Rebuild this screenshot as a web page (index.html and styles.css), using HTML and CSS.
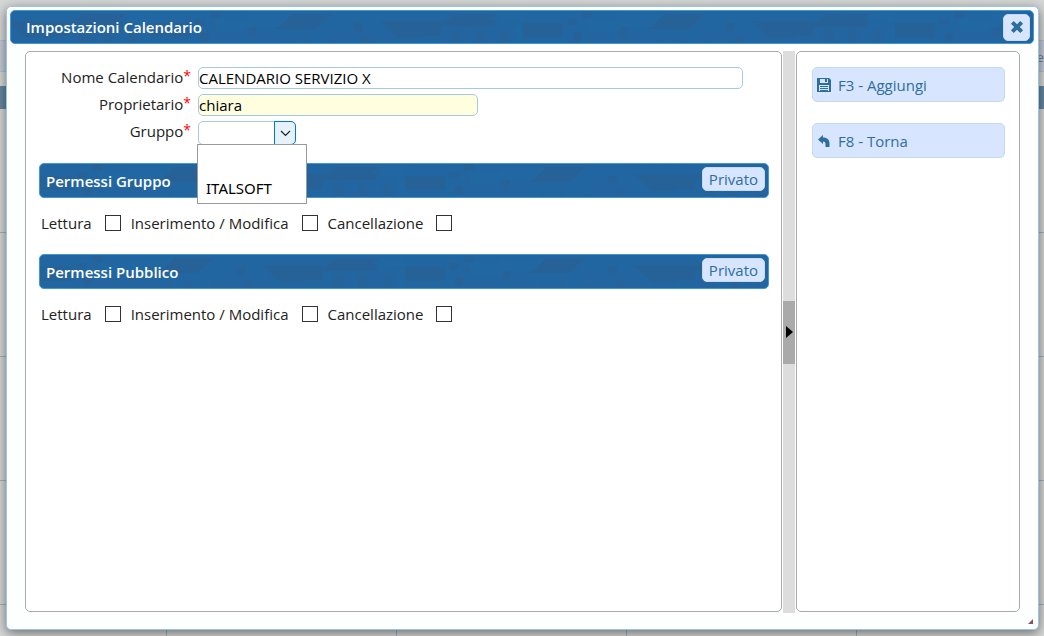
FILE: index.html
```html
<!DOCTYPE html>
<html lang="it">
<head>
<meta charset="utf-8">
<title>Impostazioni Calendario</title>
<meta name="viewport" content="width=device-width, initial-scale=1">
<link rel="stylesheet" href="styles.css">
</head>
<body>
<svg class="defs" width="0" height="0" aria-hidden="true">
  <defs>
    <g id="motif" opacity=".75">
      <path fill="#286094" d="M0 10h62v15h-17l-1 2H18zM76 3h44l-10 6h6v7H62V12zM144 12h40v14h-40zM284 3h41l-16 15h-42z"/>
      <path fill="#2564a0" d="M62 18h74v17H62zM200 20h70v15h-70zM0 26h18v9H0zM320 18h52v17h-52z" opacity=".6"/>
      <path fill="#1f69a6" d="M120 3h24v8h-24zM208 8h36v12h-36zM240 4h44l-12 12h-32zM136 16h8v18h-8z" opacity=".7"/>
      <path fill="#286094" d="M72 19h11v13H72zM97 19h9v13h-9zM122 19h8v13h-8zM240 16h9v10h-9zM188 8h10v6h-10zM203 0h10v7h-10zM347 12h9v9h-9zM355 25h8v8h-8z" opacity=".7"/>
      <circle cx="198" cy="26" r="5" fill="#286094"/>
      <circle cx="208" cy="15" r="3" fill="#286094" opacity=".6"/>
      <path fill="#286094" d="M278 32c0-6 7-6 7 0zM296 32c0-7 8-7 8 0zM322 35c0-9 8-9 8 0z" opacity=".6"/>
    </g>
    <pattern id="tech-title" width="372" height="35" patternUnits="userSpaceOnUse" x="-4"><use href="#motif"/></pattern>
    <pattern id="tech-section" width="372" height="35" patternUnits="userSpaceOnUse" x="221"><use href="#motif"/></pattern>
  </defs>
</svg>

<div class="backdrop" aria-hidden="true">
  <div class="backdrop-toolbar">e</div>
  <div class="backdrop-head"></div>
  <div class="backdrop-grid"></div>
</div>

<section class="dialog" role="dialog" aria-labelledby="dialog-title">
  <header class="bar bar-title">
    <svg class="bar-art" aria-hidden="true"><rect width="100%" height="100%" fill="url(#tech-title)"/></svg>
    <h1 class="bar-text" id="dialog-title">Impostazioni Calendario</h1>
    <button class="close" type="button" aria-label="Chiudi">
      <svg width="14" height="14" viewBox="0 0 12 12" aria-hidden="true"><path d="M2 2l8 8M10 2l-8 8" stroke="#2e6e9e" stroke-width="3.4" fill="none"/></svg>
    </button>
  </header>

  <div class="content">
    <main class="panel form-panel">
      <form class="fields">
        <label class="field-label" for="nome">Nome Calendario<sup class="required">*</sup></label>
        <input class="field field-name" id="nome" type="text" value="CALENDARIO SERVIZIO X">
        <label class="field-label" for="proprietario">Proprietario<sup class="required">*</sup></label>
        <input class="field field-owner" id="proprietario" type="text" value="chiara">
        <label class="field-label" for="gruppo">Gruppo<sup class="required">*</sup></label>
        <div class="combo">
          <select class="field field-group" id="gruppo"><option></option><option>ITALSOFT</option></select>
          <span class="combo-arrow"><svg width="11" height="7" viewBox="0 0 11 7" aria-hidden="true"><path d="M1 1l4.500 4.500L10 1" fill="none" stroke="#222" stroke-width="1.200"/></svg></span>
          <ul class="combo-list" role="listbox" aria-label="Gruppo">
            <li class="combo-option" role="option"></li>
            <li class="combo-option" role="option">ITALSOFT</li>
          </ul>
        </div>
      </form>

      <section class="permissions">
        <div class="bar bar-section">
          <svg class="bar-art" aria-hidden="true"><rect width="100%" height="100%" fill="url(#tech-section)"/></svg>
          <h2 class="bar-text">Permessi Gruppo</h2>
          <button class="private" type="button">Privato</button>
        </div>
        <div class="checks">
          <label class="check">Lettura<input class="box" type="checkbox"></label>
          <label class="check">Inserimento / Modifica<input class="box" type="checkbox"></label>
          <label class="check">Cancellazione<input class="box" type="checkbox"></label>
        </div>
      </section>

      <section class="permissions">
        <div class="bar bar-section">
          <svg class="bar-art" aria-hidden="true"><rect width="100%" height="100%" fill="url(#tech-section)"/></svg>
          <h2 class="bar-text">Permessi Pubblico</h2>
          <button class="private" type="button">Privato</button>
        </div>
        <div class="checks">
          <label class="check">Lettura<input class="box" type="checkbox"></label>
          <label class="check">Inserimento / Modifica<input class="box" type="checkbox"></label>
          <label class="check">Cancellazione<input class="box" type="checkbox"></label>
        </div>
      </section>
    </main>

    <div class="splitter">
      <button class="splitter-toggle" type="button" aria-label="Comprimi pannello"><svg width="7" height="12" viewBox="0 0 7 12" aria-hidden="true"><path d="M0 0l7 6-7 6z" fill="#000"/></svg></button>
    </div>

    <aside class="panel actions">
      <button class="action" type="button">
        <svg width="14" height="14" viewBox="0 0 14 14" aria-hidden="true"><path fill="#2e6e9e" fill-rule="evenodd" d="M0 0h12l2 2v12H0zM3 1v4h8V1zM2 7v6h10V7z"/><path fill="#2e6e9e" d="M8 1h2v3H8zM3 8h8v1H3zM3 10h8v1H3zM3 12h8v1H3z"/></svg>
        <span>F3 - Aggiungi</span>
      </button>
      <button class="action" type="button">
        <svg width="14" height="14" viewBox="0 0 14 14" aria-hidden="true"><path fill="#2e6e9e" d="M1 5.500L6 1v2.500c4.500 0 6.500 2.500 6.500 6V13h-4v-2.500C8.500 8.500 8 7.500 6 7.500V10z"/></svg>
        <span>F8 - Torna</span>
      </button>
    </aside>
  </div>
  <svg class="resize" width="5" height="5" viewBox="0 0 5 5" aria-hidden="true"><path d="M5 0v5H0z" fill="#8a5058"/></svg>
</section>
</body>
</html>
```
FILE: styles.css
```css
* { box-sizing: border-box; }

body {
  margin: 0;
  min-height: 100vh;
  padding: 6px 5px 6px 6px;
  display: flex;
  background: #d6d8d7;
  color: #222;
  font: 15px/20px "Open Sans", sans-serif;
}

button, input, select { font: inherit; margin: 0; }

.defs { position: absolute; }

/* Dimmed calendar page under the dialog */
.backdrop {
  position: absolute;
  inset: 0;
  z-index: -1;
  overflow: hidden;
  display: flex;
  flex-direction: column;
  padding-top: 40px;
}
.backdrop-toolbar {
  height: 32px;
  border: 1px solid #b5c2d0;
  border-width: 1px 0;
  background: #c4cbd9;
  color: #74828e;
  text-align: right;
  font-size: 13px;
  line-height: 32px;
}
.backdrop-head { height: 23px; margin-top: 14px; background: #6687a0; }
.backdrop-grid {
  flex: 1;
  background:
    repeating-linear-gradient(to bottom, transparent 0 123px, #9fb3bf 123px 124px),
    repeating-linear-gradient(to right, transparent 0 229px, #9fb3bf 229px 230px) -63px 0 / calc(100% + 63px) 100%;
}

.dialog {
  position: relative;
  flex: 1;
  min-width: 0;
  display: flex;
  flex-direction: column;
  padding: 3px 4px 16px 3px;
  border: 1px solid #9cc5e2;
  border-radius: 5px;
  background: #fdfefe;
  box-shadow: 0 3px 12px rgba(0, 0, 0, .5);
}

.bar {
  position: relative;
  display: flex;
  align-items: center;
  justify-content: space-between;
  border: 1px solid #4297d7;
  border-radius: 5px;
  background: #2166a1;
  overflow: hidden;
}
.bar-art { position: absolute; inset: 0; width: 100%; height: 100%; }
.bar-text {
  position: relative;
  margin: 0;
  color: #fff;
  font-size: 15px;
  font-weight: 600;
  line-height: 20px;
}
.bar-title { height: 34px; padding: 0 3px 0 15px; }
.bar-section { height: 35px; padding: 0 3px 0 6px; }

.close, .private, .action {
  border: 1px solid #c5dbec;
  border-radius: 5px;
  background: #d7e5ff;
  color: #2e6e9e;
}
.close {
  position: relative;
  width: 27px;
  height: 27px;
  padding: 0;
  display: grid;
  place-items: center;
}
.private {
  position: relative;
  height: 24px;
  margin-bottom: 4px;
  padding: 0 6px;
  line-height: 22px;
}

.content { flex: 1; display: flex; gap: 1px; margin: 7px 14px 0 15px; }
.panel {
  margin-bottom: 1px;
  border: 1px solid #aaa;
  border-radius: 5px;
  background: #fff;
}
.form-panel { flex: 1; min-width: 0; padding: 15px 12px 12px 13px; }

.fields {
  display: grid;
  grid-template-columns: 152px 1fr;
  grid-auto-rows: 22px;
  gap: 5px 7px;
  padding-right: 26px;
}
.field-label { text-align: right; white-space: nowrap; }
.required { color: #f00; font-size: 14px; line-height: 0; vertical-align: 2px; }
.field {
  height: 22px;
  padding: 0;
  border: 1px solid #a6c9e2;
  border-radius: 5px;
  background: #fff;
  color: #000;
}
.field-name { width: 100%; }
.field-owner { width: 280px; background: #ffffdf; }
.combo { position: relative; width: 98px; }
.field-group { width: 100%; height: 24px; appearance: none; }
.combo-arrow {
  position: absolute;
  top: 0;
  right: 0;
  width: 22px;
  height: 24px;
  display: grid;
  place-items: center;
  border: 1px solid #0078d7;
  border-radius: 0 5px 5px 0;
  background: #e5f1fb;
  pointer-events: none;
}
.combo-list {
  position: absolute;
  top: 23px;
  left: -1px;
  z-index: 1;
  width: 110px;
  margin: 0;
  padding: 1px;
  border: 1px solid #999;
  background: #fff;
  list-style: none;
  color: #000;
  font: 15px/28px "Noto Sans", sans-serif;
}
.combo-option { height: 28px; padding-left: 7px; }

.permissions { margin-top: 20px; }
.checks { display: flex; gap: 10px; padding: 15px 2px 1px; }
.check { display: flex; align-items: center; gap: 13px; }
.box {
  appearance: none;
  width: 16px;
  height: 16px;
  border: 1px solid #333;
  background: #fff;
}

.splitter { width: 12px; display: flex; align-items: center; background: #ddd; }
.splitter-toggle {
  width: 100%;
  height: 63px;
  padding: 0;
  border: 0;
  display: grid;
  place-items: center;
  background: #aaa;
}

.actions {
  width: 224px;
  padding: 15px 14px 15px 15px;
  display: flex;
  flex-direction: column;
  gap: 21px;
}
.action {
  height: 35px;
  padding: 0 4px;
  display: flex;
  align-items: center;
  gap: 7px;
}

.resize { position: absolute; right: 5px; bottom: 5px; }
```
